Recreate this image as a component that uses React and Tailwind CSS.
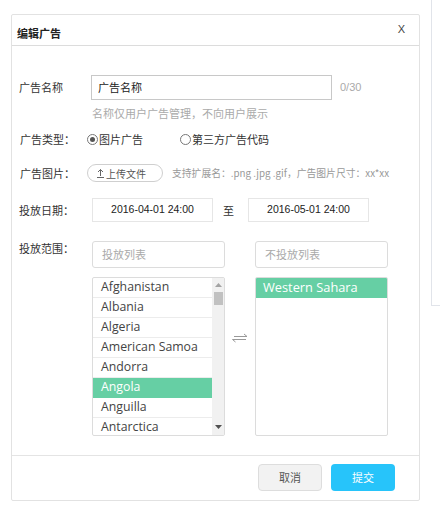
import React from 'react';

const countries = [
  'Afghanistan',
  'Albania',
  'Algeria',
  'American Samoa',
  'Andorra',
  'Angola',
  'Anguilla',
  'Antarctica',
];

function Radio({ checked }) {
  return (
    <span className="w-[11px] h-[11px] rounded-full border border-[#777] flex items-center justify-center bg-white">
      {checked && <span className="w-[5px] h-[5px] rounded-full bg-[#555]" />}
    </span>
  );
}

export default function App() {
  return (
    <div
      className="relative w-[440px] h-[509px] bg-white overflow-hidden text-[#333]"
      style={{ fontFamily: '"Noto Sans CJK SC", "Noto Sans", sans-serif' }}
    >
      {/* page behind the dialog */}
      <div className="absolute left-[431px] top-0 w-[20px] h-[306px] border-l border-b border-[#e1e4ea]" />

      <div className="relative ml-[11px] mt-[14px] w-[409px] h-[487px] border border-[#e2e2e2] rounded-[2px] flex flex-col bg-white">
        {/* header */}
        <div className="h-[31px] border-b border-[#dcdcdc] flex items-center justify-between pl-[5px] pr-[14px]">
          <span className="text-[11px] font-bold text-[#222] leading-none mt-[6px]">编辑广告</span>
          <span className="text-[11px] text-[#444] leading-none mt-[-1px]" style={{ fontFamily: '"Liberation Sans", sans-serif' }}>
            X
          </span>
        </div>

        {/* body */}
        <div className="flex-1 pl-[7px] pt-[29px] text-[11px]">
          <div className="flex items-center h-[25px]">
            <span className="w-[72px] text-[#333]">广告名称</span>
            <div className="w-[241px] h-[25px] border border-[#c8c8c8] flex items-center pl-[6px] text-[11px] text-[#222]">
              广告名称
            </div>
            <span className="ml-[8px] text-[#aaa]" style={{ fontFamily: '"Liberation Sans", sans-serif' }}>
              0/30
            </span>
          </div>
          <div className="ml-[73px] mt-[4px] text-[#aaa] leading-[18px]">名称仅用户广告管理，不向用户展示</div>

          <div className="flex items-center h-[18px] mt-[8px]">
            <span className="w-[68px] pl-[1px]">广告类型：</span>
            <Radio checked />
            <span className="ml-[1px] w-[81px]">图片广告</span>
            <Radio />
            <span className="ml-[1px]">第三方广告代码</span>
          </div>

          <div className="flex items-center h-[18px] mt-[16px]">
            <span className="w-[68px] pl-[1px]">广告图片：</span>
            <div className="w-[76px] h-[18px] rounded-full border border-[#cfcfcf] flex items-center pl-[8px] text-[10px] text-[#555]">
              <svg width="9" height="10" viewBox="0 0 9 10" fill="none" stroke="#666" strokeWidth="1">
                <path d="M4.5 8V1.5 M2 4 L4.5 1.5 L7 4 M1 9.5 H8" />
              </svg>
              <span className="ml-[1px]">上传文件</span>
            </div>
            <span className="ml-[9px] text-[9.8px] text-[#999]">支持扩展名：.png .jpg .gif，广告图片尺寸：xx*xx</span>
          </div>

          <div className="flex items-center h-[24px] mt-[16px]">
            <span className="w-[73px]">投放日期：</span>
            <div
              className="w-[121px] h-[24px] border border-[#e6e6e6] flex items-center justify-center text-[10.5px] text-[#222]"
              style={{ fontFamily: '"Liberation Sans", sans-serif' }}
            >
              2016-04-01 24:00
            </div>
            <span className="w-[35px] pl-[10px]">至</span>
            <div
              className="w-[121px] h-[24px] border border-[#e6e6e6] flex items-center justify-center text-[10.5px] text-[#222]"
              style={{ fontFamily: '"Liberation Sans", sans-serif' }}
            >
              2016-05-01 24:00
            </div>
          </div>

          <div className="flex mt-[19px]">
            <span className="w-[73px] leading-none mt-[2px]">投放范围：</span>
            <div className="flex">
              <div className="flex flex-col w-[133px]">
                <div className="h-[27px] border border-[#dcdcdc] rounded-[3px] flex items-center pl-[9px] text-[11px] text-[#aaa]">
                  投放列表
                </div>
                <div className="mt-[9px] h-[159px] border border-[#dcdcdc] rounded-[2px] flex overflow-hidden">
                  <div className="flex-1 flex flex-col" style={{ fontFamily: '"Open Sans", sans-serif' }}>
                    {countries.map((c) => (
                      <div
                        key={c}
                        className={
                          c === 'Angola'
                            ? 'h-[20px] shrink-0 flex items-center pl-[8px] text-[12.3px] bg-[#66cfa4] text-white border-b border-[#66cfa4]'
                            : 'h-[20px] shrink-0 flex items-center pl-[8px] text-[12.3px] text-[#444] border-b border-[#ececec]'
                        }
                      >
                        {c}
                      </div>
                    ))}
                  </div>
                  <div className="w-[12px] bg-[#f1f1f1] flex flex-col items-center">
                    <svg width="7" height="4" viewBox="0 0 7 4" className="mt-[5px]">
                      <path d="M0 4 L3.5 0 L7 4 Z" fill="#a3a3a3" />
                    </svg>
                    <div className="w-[9px] h-[13px] bg-[#c1c1c1] mt-[5px]" />
                    <div className="flex-1" />
                    <svg width="7" height="4" viewBox="0 0 7 4" className="mb-[6px]">
                      <path d="M0 0 L7 0 L3.5 4 Z" fill="#505050" />
                    </svg>
                  </div>
                </div>
              </div>

              <div className="w-[30px] flex items-start justify-center pt-[92px]">
                <svg width="18" height="10" viewBox="0 0 18 10" fill="none" stroke="#999" strokeWidth="1">
                  <path d="M3 3.5 H16 L13 1 M1.5 6.5 H15 M1.5 6.5 L4.5 9" />
                </svg>
              </div>

              <div className="flex flex-col w-[133px]">
                <div className="h-[27px] border border-[#dcdcdc] rounded-[3px] flex items-center pl-[9px] text-[11px] text-[#aaa]">
                  不投放列表
                </div>
                <div className="mt-[9px] h-[159px] border border-[#dcdcdc] rounded-[2px] flex flex-col overflow-hidden">
                  <div
                    className="h-[20px] flex items-center pl-[7px] text-[12.8px] bg-[#66cfa4] text-white"
                    style={{ fontFamily: '"Open Sans", sans-serif' }}
                  >
                    Western Sahara
                  </div>
                </div>
              </div>
            </div>
          </div>
        </div>

        {/* footer */}
        <div className="h-[45px] border-t border-[#e4e4e4] flex items-start justify-end pr-[24px] pt-[8px] gap-[9px]">
          <button className="w-[64px] h-[27px] rounded-[4px] border border-[#dddddd] bg-[#f2f2f2] text-[11px] text-[#555]">
            取消
          </button>
          <button className="w-[64px] h-[27px] rounded-[4px] bg-[#27c4fa] text-[11px] text-white">提交</button>
        </div>
      </div>
    </div>
  );
}
